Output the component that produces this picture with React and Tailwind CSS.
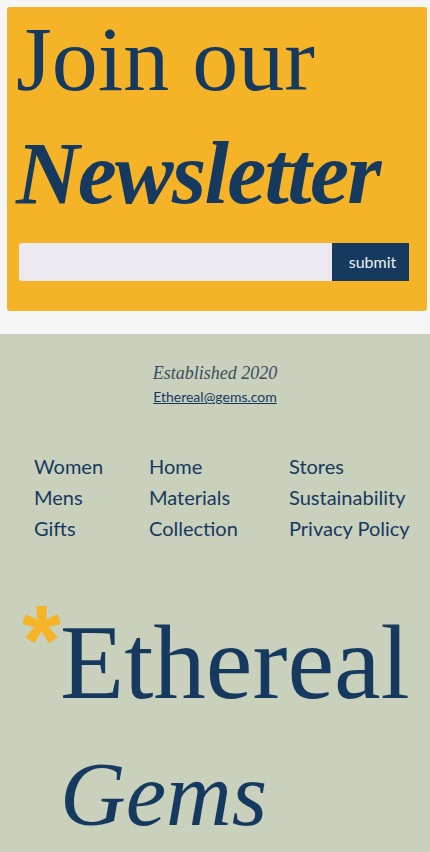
import React, { useState } from 'react';

const serif = "font-['Liberation_Serif',serif]";
const sans = "font-['Lato',sans-serif]";

const linkColumns = [
  ['Women', 'Mens', 'Gifts'],
  ['Home', 'Materials', 'Collection'],
  ['Stores', 'Sustainability', 'Privacy Policy'],
];

function Newsletter() {
  const [email, setEmail] = useState('');

  const handleSubmit = (e) => {
    e.preventDefault();
    setEmail('');
  };

  return (
    <section className="pl-[7px] pr-[3px] pt-[7px]">
      <div className="bg-[#f5b427] rounded-[3px] pl-3 pt-[6px] pb-[30px] text-[#163a5f]">
        <h2 className={`${serif} -ml-[3px]`}>
          <span className="block text-[92px] leading-none">Join our</span>
          <span className="block mt-[25px] text-[88px] leading-none italic font-bold tracking-[-0.02em]">
            Newsletter
          </span>
        </h2>
        {/* Signup form */}
        <form onSubmit={handleSubmit} className="flex mt-[25px] mr-[18px] h-[38px]">
          <input
            type="email"
            value={email}
            onChange={(e) => setEmail(e.target.value)}
            className="flex-1 min-w-0 bg-[#ebe8ef] rounded-l-[3px] px-3 outline-none"
            aria-label="Email address"
          />
          <button
            type="submit"
            className={`${sans} w-[77px] bg-[#163a5f] text-[#eef0f5] text-[16px] pl-1`}
          >
            submit
          </button>
        </form>
      </div>
    </section>
  );
}

function Footer() {
  return (
    <footer className="flex-1 mt-[23px] bg-[#c9d0bb] text-[#163a5f] pt-[27px] pb-10">
      <p className={`${serif} italic text-center text-[18px] leading-[24px] text-[#3a4d60]`}>
        Established 2020
      </p>
      <p className="text-center mt-[1px] leading-[20px]">
        <a href="#" className={`${sans} text-[14px] underline`}>
          Ethereal@gems.com
        </a>
      </p>

      <nav className={`${sans} grid grid-cols-[115px_140px_1fr] pl-[34px] mt-[44px]`}>
        {linkColumns.map((col, i) => (
          <ul key={i}>
            {col.map((item) => (
              <li key={item} className="text-[20px] leading-[31px]">
                <a href="#">{item}</a>
              </li>
            ))}
          </ul>
        ))}
      </nav>

      <div className={`${serif} mt-[66px] pl-[22px]`}>
        <div className="flex items-start leading-none">
          <span className="font-['Liberation_Sans',sans-serif] font-bold text-[#f5b427] text-[100px] leading-none w-[38px] -mt-[20px]">
            *
          </span>
          <span className="text-[105px] leading-none">Ethereal</span>
        </div>
        <div className="pl-[38px] mt-[34px] text-[91px] leading-none italic">Gems</div>
      </div>
    </footer>
  );
}

export default function App() {
  return (
    <div className="min-h-screen flex flex-col bg-[#f4f5f4]">
      <Newsletter />
      <Footer />
    </div>
  );
}
